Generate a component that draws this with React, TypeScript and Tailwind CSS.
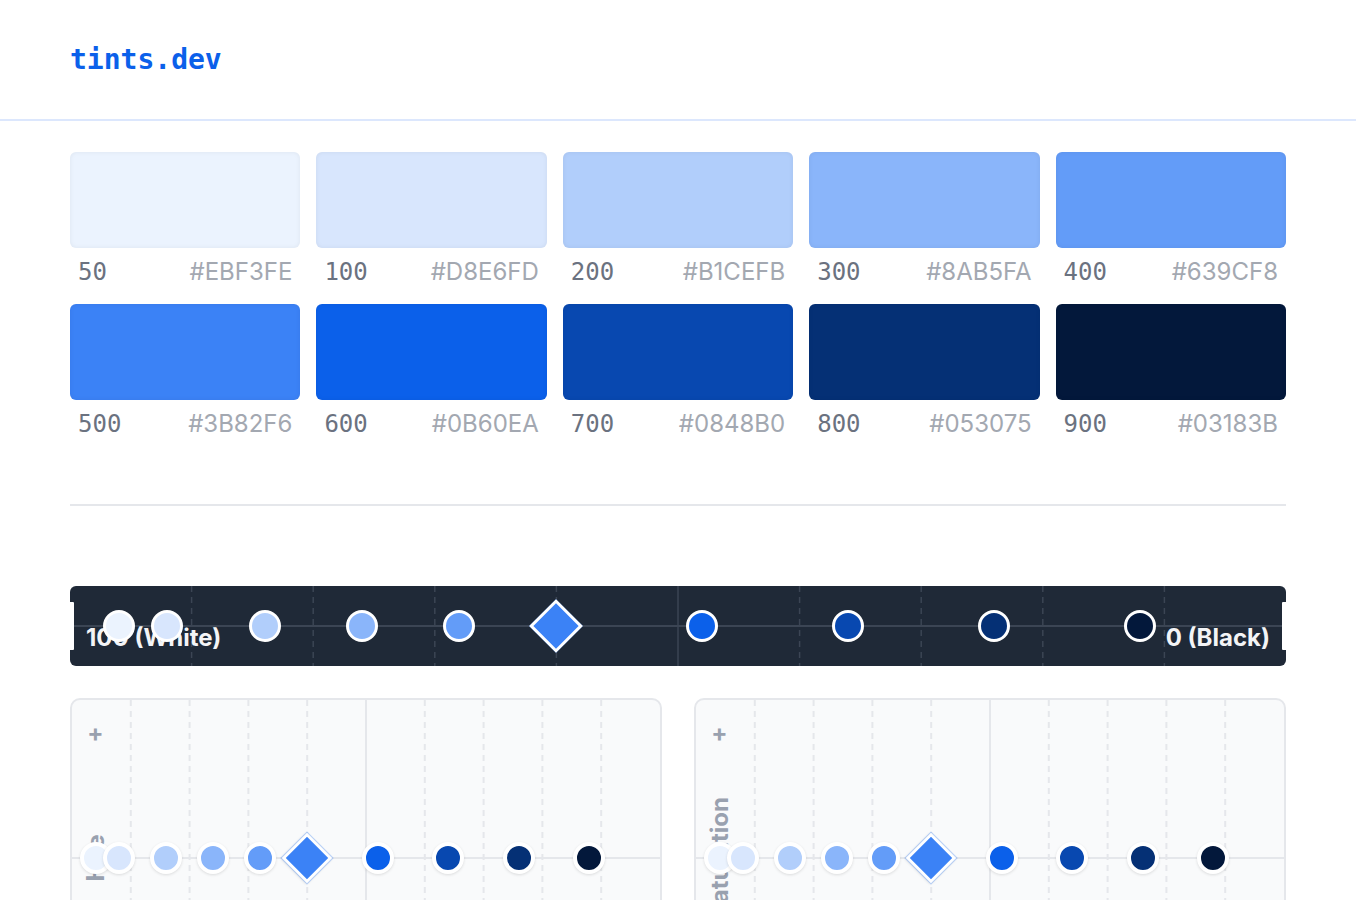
import React from "react";

type Tint = { s: string; hex: string; pos: number; key?: boolean };

const tints: Tint[] = [
  { s: "50", hex: "#EBF3FE", pos: 4 },
  { s: "100", hex: "#D8E6FD", pos: 8 },
  { s: "200", hex: "#B1CEFB", pos: 16 },
  { s: "300", hex: "#8AB5FA", pos: 24 },
  { s: "400", hex: "#639CF8", pos: 32 },
  { s: "500", hex: "#3B82F6", pos: 40, key: true },
  { s: "600", hex: "#0B60EA", pos: 52 },
  { s: "700", hex: "#0848B0", pos: 64 },
  { s: "800", hex: "#053075", pos: 76 },
  { s: "900", hex: "#03183B", pos: 88 },
];

const mono = { fontFamily: '"DejaVu Sans Mono", "Liberation Mono", monospace' };
const ticks = [1, 2, 3, 4, 5, 6, 7, 8, 9];

function Swatch({ t }: { t: Tint }) {
  return (
    <div className="flex flex-col">
      <div
        className="h-24 rounded-md shadow-[inset_0_0_5px_rgba(0,0,0,0.06)]"
        style={{ backgroundColor: t.hex }}
      />
      <div className="mt-2 flex h-8 items-center justify-between px-2 text-2xl leading-8">
        <span className="text-[#6b7280]" style={mono}>
          {t.s}
        </span>
        <span className="text-[#a3a8b1]">{t.hex}</span>
      </div>
    </div>
  );
}

function DarkBar() {
  return (
    <div className="relative mt-20 h-20 rounded-md bg-[#1f2937]">
      <svg className="absolute inset-0 h-full w-full overflow-visible">
        {ticks.map((k) => (
          <line
            key={k}
            x1={`${k * 10}%`}
            x2={`${k * 10}%`}
            y1="0"
            y2="100%"
            stroke="#3b4554"
            strokeWidth="1.5"
            strokeDasharray={k === 5 ? undefined : "6 5"}
          />
        ))}
        <line x1="0" x2="100%" y1="50%" y2="50%" stroke="#3b4554" strokeWidth="2" />
      </svg>
      <span className="absolute bottom-4 left-4 text-2xl font-bold leading-6 text-gray-100">
        100 (White)
      </span>
      <span className="absolute bottom-4 right-4 text-2xl font-bold leading-6 text-gray-100">
        0 (Black)
      </span>
      <div className="absolute -left-1 top-4 h-12 w-2 rounded-[1px] bg-white" />
      <div className="absolute -right-1 top-4 h-12 w-2 rounded-[1px] bg-white" />
      {tints.map((t) =>
        t.key ? (
          <div
            key={t.s}
            className="absolute top-1/2 h-[38px] w-[38px] -translate-x-1/2 -translate-y-1/2 rotate-45 border-[3px] border-white"
            style={{ left: `${t.pos}%`, backgroundColor: t.hex }}
          />
        ) : (
          <div
            key={t.s}
            className="absolute top-1/2 h-8 w-8 -translate-x-1/2 -translate-y-1/2 rounded-full border-[3px] border-white"
            style={{ left: `${t.pos}%`, backgroundColor: t.hex }}
          />
        )
      )}
    </div>
  );
}

function Chart({ label }: { label: string }) {
  return (
    <div className="relative h-[320px] overflow-hidden rounded-[10px] border-2 border-gray-200 bg-gray-50">
      <svg className="absolute inset-0 h-full w-full">
        {ticks.map((k) => (
          <line
            key={k}
            x1={`${k * 10}%`}
            x2={`${k * 10}%`}
            y1="0"
            y2="100%"
            stroke="#e5e7eb"
            strokeWidth="2"
            strokeDasharray={k === 5 ? undefined : "6 5"}
          />
        ))}
        <line x1="0" x2="100%" y1="50%" y2="50%" stroke="#e5e7eb" strokeWidth="2" />
      </svg>
      <span className="absolute left-[4%] top-[33px] -translate-x-1/2 -translate-y-1/2 text-2xl font-bold leading-none text-gray-400">
        +
      </span>
      <span className="absolute bottom-[33px] left-[4%] -translate-x-1/2 translate-y-1/2 text-2xl font-bold leading-none text-gray-400">
        −
      </span>
      <span className="absolute left-[4%] top-1/2 -translate-x-1/2 -translate-y-1/2 -rotate-90 whitespace-nowrap text-2xl font-bold leading-none text-gray-400">
        {label}
      </span>
      {tints.map((t) =>
        t.key ? (
          <div
            key={t.s}
            className="absolute top-1/2 h-9 w-9 -translate-x-1/2 -translate-y-1/2 rotate-45 border-[3px] border-white shadow-[0_0_0_1px_rgba(59,130,246,0.25),0_1px_3px_rgba(0,0,0,0.12)]"
            style={{ left: `${t.pos}%`, backgroundColor: t.hex }}
          />
        ) : (
          <div
            key={t.s}
            className="absolute top-1/2 h-8 w-8 -translate-x-1/2 -translate-y-1/2 rounded-full border-4 border-white shadow-[0_1px_3px_rgba(0,0,0,0.12)]"
            style={{ left: `${t.pos}%`, backgroundColor: t.hex }}
          />
        )
      )}
    </div>
  );
}

export default function App() {
  return (
    <div className="min-h-screen bg-white" style={{ fontFamily: 'Inter, "Noto Sans", sans-serif' }}>
      <header className="flex h-[121px] items-center border-b-2 border-[#DCE7FD] px-[70px]">
        <span className="text-[28px] font-bold leading-none text-[#0B60EA]" style={mono}>
          tints.dev
        </span>
      </header>
      <main className="px-[70px] pt-[31px] pb-10">
        <div className="grid grid-cols-5 gap-x-4 gap-y-4">
          {tints.map((t) => (
            <Swatch key={t.s} t={t} />
          ))}
        </div>
        <div className="mt-16 border-t-2 border-gray-200" />
        <DarkBar />
        <div className="mt-8 grid grid-cols-2 gap-8">
          <Chart label="Hue" />
          <Chart label="Saturation" />
        </div>
      </main>
    </div>
  );
}
